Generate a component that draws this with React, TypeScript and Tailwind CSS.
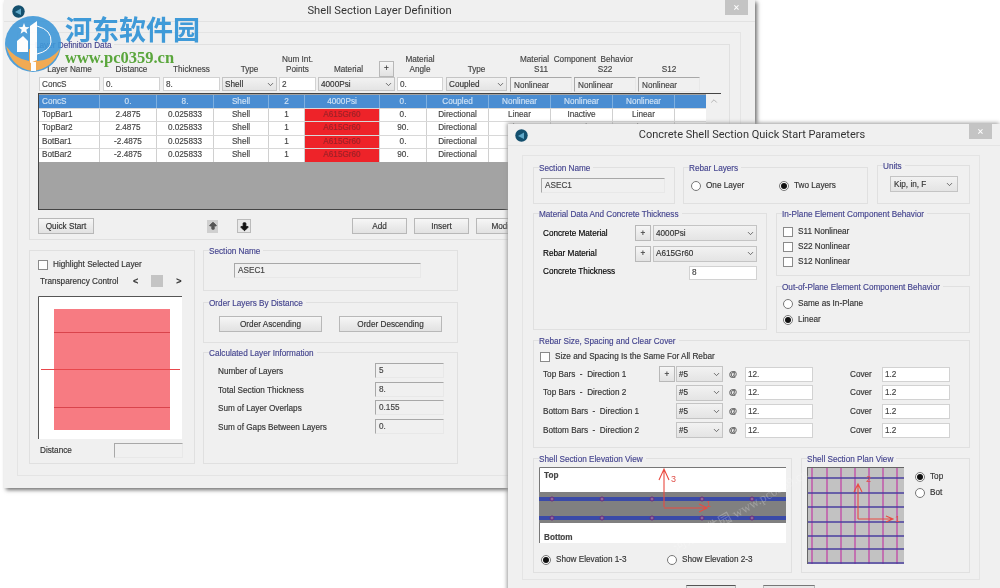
import React from "react";
import { ChevronDown, ChevronUp, ArrowBigUp, ArrowBigDown } from "lucide-react";

type P = { className?: string; children?: React.ReactNode };

const Group = ({ title, className = "", children }: P & { title: string }) => (
  <div className={`relative border border-[#e0e0e0] ${className}`}>
    <span className="absolute top-[-4px] left-[5px] bg-[#f0f0f0] pr-[3px] leading-[10px] whitespace-nowrap text-[#45458f]">{title}</span>
    {children}
  </div>
);
const Btn = ({ className = "", children }: P) => (
  <div className={`flex items-center justify-center border border-[#b8b8b8] bg-linear-to-b from-[#f6f6f6] to-[#e2e2e2] text-[#333] ${className}`}>{children}</div>
);
const Input = ({ className = "", children }: P) => (
  <div className={`flex items-center h-[14px] border border-[#d2d2d2] bg-white pl-[2px] text-[#444] ${className}`}>{children}</div>
);
const Sunken = ({ className = "", children }: P) => (
  <div className={`flex h-[15px] border border-t-[#a8a8a8] border-l-[#a8a8a8] border-r-[#e8e8e8] border-b-[#e8e8e8] bg-[#f0f0f0] pl-[3px] pt-[1px] text-[#444] ${className}`}>{children}</div>
);
const Select = ({ className = "", children }: P) => (
  <div className={`flex items-center justify-between border border-[#c4c4c4] bg-linear-to-b from-[#f2f2f2] to-[#e4e4e4] pl-[2px] pr-[1px] text-[#333] ${className}`}>
    <span>{children}</span>
    <ChevronDown size={9} strokeWidth={2} className="text-[#444]" />
  </div>
);
const Check = ({ label, className = "" }: { label: string; className?: string }) => (
  <div className={`flex items-center text-[#333] ${className}`}>
    <span className="w-[10px] h-[10px] border border-[#8a8a8a] bg-white mr-[5px] shrink-0" />
    <span className="whitespace-nowrap">{label}</span>
  </div>
);
const Radio = ({ label, on = false, className = "" }: { label: string; on?: boolean; className?: string }) => (
  <div className={`flex items-center text-[#333] ${className}`}>
    <span className="flex items-center justify-center w-[10px] h-[10px] rounded-full border border-[#777] bg-white mr-[5px] shrink-0">
      {on && <span className="w-[6px] h-[6px] rounded-full bg-[#111]" />}
    </span>
    <span className="whitespace-nowrap">{label}</span>
  </div>
);
const Close = ({ className = "" }: P) => (
  <div className={`absolute top-0 flex items-center justify-center w-[23px] h-[15px] bg-[#c4c4c4] text-white text-[11px] ${className}`}>×</div>
);
const AppIcon = ({ className = "" }: P) => (
  <svg width="13" height="13" viewBox="0 0 13 13" className={className}>
    <circle cx="6.5" cy="6.5" r="6.2" fill="#14506e" />
    <path d="M3 7 L9 3.5 V10 Z" fill="#5fa8c8" />
  </svg>
);
const Logo = () => (
  <svg width="66" height="70" viewBox="0 0 66 70" className="shrink-0 opacity-90">
    <circle cx="33" cy="40" r="28" fill="#3f98d8" />
    <path d="M6 42 Q12 64 32 67 Q53 65 60 45 Q50 57 37 57 L37 45 L29 45 L29 57 Q15 55 6 42Z" fill="#f2a343" />
    <path d="M17 48 V37 L23 32 L28 37 V48Z" fill="#fff" />
    <path d="M24 19 L25.5 23 L29.5 23.3 L26.3 25.8 L27.4 29.8 L24 27.5 L20.6 29.8 L21.7 25.8 L18.5 23.3 L22.5 23Z" fill="#fff" />
    <path d="M30 22 L37 17 V56 L30 59Z" fill="#fff" />
    <path d="M37 22 Q52 26 51 38 Q50 47 37 50" fill="none" stroke="#fff" strokeWidth="1" />
    <path d="M31 58 H36 V67 H31Z" fill="#fff" />
  </svg>
);

const HEAD_ROWS = [
  ["TopBar1", "2.4875", "0.025833", "Shell", "1", "A615Gr60", "0.", "Directional", "Linear", "Inactive", "Linear"],
  ["TopBar2", "2.4875", "0.025833", "Shell", "1", "A615Gr60", "90.", "Directional", "Linear", "Inactive", "Linear"],
  ["BotBar1", "-2.4875", "0.025833", "Shell", "1", "A615Gr60", "0.", "Directional", "Linear", "Inactive", "Linear"],
  ["BotBar2", "-2.4875", "0.025833", "Shell", "1", "A615Gr60", "90.", "Directional", "Linear", "Inactive", "Linear"],
];
const TOP_ROW = ["ConcS", "0.", "8.", "Shell", "2", "4000Psi", "0.", "Coupled", "Nonlinear", "Nonlinear", "Nonlinear"];
const TABLE_COLS = "grid grid-cols-[61px_57px_57px_55px_36px_75px_47px_62px_62px_62px_62px]";
const ENTRY_COLS = "grid grid-cols-[64px_60px_59px_57px_39px_79px_49px_64px_192px]";

const LayerWindow = () => (
  <div className="absolute left-[4px] top-0 w-[751px] h-[488px] bg-[#f0f0f0] shadow-[2px_2px_4px_#6f6f6f]">
    <div className="relative flex items-center justify-center h-[22px] border-b border-[#e2e2e2] text-[11.2px] text-[#333] font-['Roboto'] [-webkit-text-stroke:0px]">
      <AppIcon className="absolute left-[8px] top-[5px]" />
      Shell Section Layer Definition
      <Close className="right-[7px]" />
    </div>
    <div className="mt-[10px] ml-[13px] w-[724px] h-[444px] border border-[#e4e4e4] pl-[11px] pt-[11px]">
      <Group title="Layer Definition Data" className="w-[701px] h-[196px] pl-[9px] pt-[10px]">
        <div className={`${ENTRY_COLS} h-[22px] items-end pb-[3px] text-[#444] leading-[10px] text-center`}>
          <span className="mr-[3px]">Layer Name</span>
          <span className="mr-[3px]">Distance</span>
          <span className="mr-[2px]">Thickness</span>
          <span className="mr-[2px]">Type</span>
          <span className="mr-[2px]">Num Int.<br />Points</span>
          <div className="flex items-end">
            <span className="w-[61px]">Material</span>
            <Btn className="w-[15px] h-[16px] text-[#222] mb-[-2px]">+</Btn>
          </div>
          <span className="mr-[3px]">Material<br />Angle</span>
          <span className="mr-[3px]">Type</span>
          <div className="flex flex-col">
            <span className="pl-[10px] text-left whitespace-pre">Material  Component  Behavior</span>
            <div className="grid grid-cols-[64px_64px_62px]">
              <span className="mr-[2px]">S11</span>
              <span className="mr-[2px]">S22</span>
              <span>S12</span>
            </div>
          </div>
        </div>
        <div className={`${ENTRY_COLS} h-[14px]`}>
          <Input className="mr-[3px]">ConcS</Input>
          <Input className="mr-[3px]">0.</Input>
          <Input className="mr-[2px]">8.</Input>
          <Select className="mr-[2px] h-[14px]">Shell</Select>
          <Input className="mr-[2px]">2</Input>
          <Select className="mr-[2px] h-[14px]">4000Psi</Select>
          <Input className="mr-[3px]">0.</Input>
          <Select className="mr-[3px] h-[14px]">Coupled</Select>
          <div className="grid grid-cols-[64px_64px_62px]">
            <Sunken className="h-[14px] mr-[2px] items-center pl-[2px] pt-0">Nonlinear</Sunken>
            <Sunken className="h-[14px] mr-[2px] items-center pl-[2px] pt-0">Nonlinear</Sunken>
            <Sunken className="h-[14px] items-center pl-[2px] pt-0">Nonlinear</Sunken>
          </div>
        </div>
        <div className="flex mt-[2px] ml-[-1px] h-[117px] w-[683px] border-t border-[#444]">
          <div className="w-[668px] border-l border-b border-[#444] bg-[#a3a3a3] pt-[1px]">
            <div className={`${TABLE_COLS} h-[13px] bg-[#4a8dd2] text-[#cfe2f5] text-center leading-[13px]`}>
              {TOP_ROW.map((t, i) => (
                <span key={i} className={`border-r border-[#7fb0e0] ${i === 0 ? "text-left pl-[3px]" : ""}`}>{t}</span>
              ))}
            </div>
            {HEAD_ROWS.map((r, ri) => (
              <div key={ri} className={`${TABLE_COLS} h-[13.4px] bg-white text-[#444] text-center leading-[12px] border-t border-[#d8d8d8]`}>
                {r.map((t, i) => (
                  <span key={i} className={`border-r border-[#d0d0d0] ${i === 0 ? "text-left pl-[3px]" : ""} ${i === 5 ? "bg-[#ee2329] text-[#9c2228]" : ""}`}>{t}</span>
                ))}
              </div>
            ))}
          </div>
          <div className="flex justify-center w-[15px] pt-[2px]"><ChevronUp size={10} className="text-[#aaa]" /></div>
        </div>
        <div className="flex items-center mt-[8px] ml-[-1px] h-[16px]">
          <Btn className="w-[56px] h-[16px]">Quick Start</Btn>
          <div className="flex items-center justify-center ml-[113px] w-[11px] h-[13px] bg-[#cfcfcf]"><ArrowBigUp size={10} fill="#555" className="text-[#555]" /></div>
          <div className="flex items-center justify-center ml-[19px] w-[14px] h-[14px] border border-[#bbb] bg-[#e8e8e8]"><ArrowBigDown size={11} fill="#111" className="text-[#111]" /></div>
          <Btn className="ml-[101px] w-[55px] h-[16px]">Add</Btn>
          <Btn className="ml-[7px] w-[55px] h-[16px]">Insert</Btn>
          <Btn className="ml-[7px] w-[55px] h-[16px] border-[#6d9fd0]">Modify</Btn>
          <Btn className="ml-[7px] w-[55px] h-[16px]">Delete</Btn>
        </div>
      </Group>
      <div className="flex mt-[10px]">
        <div className="w-[166px] h-[214px] border border-[#e0e0e0] pl-[8px] pt-[8px] text-[#333]">
          <Check label="Highlight Selected Layer" className="h-[11px]" />
          <div className="flex items-center mt-[4px] h-[14px]">
            <span className="ml-[2px] w-[93px] whitespace-nowrap">Transparency Control</span>
            <span className="text-[9px] font-bold">&lt;</span>
            <span className="ml-[13px] w-[12px] h-[12px] bg-[#c4c4c4]" />
            <span className="ml-[13px] text-[9px] font-bold">&gt;</span>
          </div>
          <svg width="144" height="143" viewBox="0 0 144 143" className="mt-[8px]">
            <rect width="144" height="143" fill="#fff" />
            <path d="M0.5 143 V0.5 H144" fill="none" stroke="#555" />
            <rect x="16" y="13" width="116" height="121" fill="#f77b82" />
            <path d="M16 36.5 H132 M16 111.5 H132" stroke="#d9444c" />
            <path d="M3 73.5 H142" stroke="#e8474c" />
          </svg>
          <div className="flex items-center mt-[4px] h-[14px]">
            <span className="ml-[2px] w-[74px]">Distance</span>
            <Sunken className="w-[69px] h-[14px]" />
          </div>
        </div>
        <div className="ml-[8px] w-[255px] flex flex-col">
          <Group title="Section Name" className="h-[41px] pl-[30px] pt-[12px]">
            <Sunken className="w-[187px]">ASEC1</Sunken>
          </Group>
          <Group title="Order Layers By Distance" className="mt-[11px] h-[41px] flex pl-[15px] pt-[13px]">
            <Btn className="w-[103px] h-[16px]">Order Ascending</Btn>
            <Btn className="ml-[17px] w-[103px] h-[16px]">Order Descending</Btn>
          </Group>
          <Group title="Calculated Layer Information" className="mt-[9px] h-[112px] pl-[14px] pr-[13px] pt-[10px]">
            {[["Number of Layers", "5"], ["Total Section Thickness", "8."], ["Sum of Layer Overlaps", "0.155"], ["Sum of Gaps Between Layers", "0."]].map(([l, v]) => (
              <div key={l} className="flex items-center justify-between h-[15px] mb-[3.7px] text-[#333]">
                <span className="pt-[2px]">{l}</span>
                <Sunken className="w-[69px]">{v}</Sunken>
              </div>
            ))}
          </Group>
        </div>
      </div>
    </div>
  </div>
);

const BAR_ROWS = [
  ["Top Bars  -  Direction 1", true],
  ["Top Bars  -  Direction 2", false],
  ["Bottom Bars  -  Direction 1", false],
  ["Bottom Bars  -  Direction 2", false],
] as const;

const Elevation = () => (
  <div className="relative w-[247px] h-[76px]">
    <svg width="247" height="76" viewBox="0 0 247 76" className="block">
      <rect width="247" height="76" fill="#fff" />
      <path d="M0.5 76 V0.5 H247" fill="none" stroke="#777" />
      <rect y="25" width="247" height="31" fill="#808080" />
      <rect y="30" width="247" height="4" fill="#3a4aa8" />
      <rect y="49" width="247" height="4" fill="#3a4aa8" />
      {[13, 63, 113, 163, 213].map((x) => (
        <g key={x} fill="#8a6a9a" stroke="#6a2a80" strokeWidth="1">
          <circle cx={x} cy="32" r="2" />
          <circle cx={x} cy="51" r="2" />
        </g>
      ))}
      <g fill="none" stroke="#ea4a40" strokeWidth="1.1">
        <path d="M125 40 V2 M120 13 L125 2 L130 13" />
        <path d="M125 41 H168 M160 37 L168 41 L160 45" />
      </g>
      <text x="132" y="15" fontSize="9" fill="#e0504a" fontFamily="Liberation Sans">3</text>
      <text x="167" y="40" fontSize="9" fill="#e0504a" fontFamily="Liberation Sans">1</text>
    </svg>
    <span className="absolute left-[5px] top-[3px] font-bold text-[#444]">Top</span>
    <span className="absolute left-[5px] bottom-[0px] font-bold text-[#444]">Bottom</span>
  </div>
);

const Plan = () => (
  <svg width="97" height="97" viewBox="0 0 97 97" className="block shrink-0">
    <rect width="97" height="97" fill="#c2c2c2" />
    <g stroke="#c050a8" strokeWidth="1.4">
      {[5, 20, 34, 48, 62, 76, 90].map((x) => <path key={x} d={`M${x} 0 V97`} />)}
    </g>
    <g stroke="#4a3f9f" strokeWidth="1.4">
      {[11, 26, 40, 55, 69, 82, 96].map((y) => <path key={y} d={`M0 ${y} H97`} />)}
    </g>
    <path d="M0.5 0 V97 M0 0.5 H97" stroke="#666" fill="none" />
    <g fill="none" stroke="#ea4a40" strokeWidth="1.1">
      <path d="M51 52 V17 M47 25 L51 17 L55 25" />
      <path d="M51 52 H86 M79 49 L86 52 L79 55" />
    </g>
    <text x="59" y="15" fontSize="9" fill="#e0504a" fontFamily="Liberation Sans">2</text>
    <text x="88" y="55" fontSize="9" fill="#e0504a" fontFamily="Liberation Sans">1</text>
  </svg>
);

const QuickWindow = () => (
  <div className="absolute left-[508px] top-[124px] w-[492px] h-[480px] bg-[#f0f0f0] shadow-[-1px_-1px_4px_#9a9a9a]">
    <div className="relative flex items-center justify-center h-[22px] border-b border-[#e4e4e4] pr-[4px] text-[11px] text-[#333] font-['Roboto'] [-webkit-text-stroke:0px]">
      <AppIcon className="absolute left-[7px] top-[5px]" />
      Concrete Shell Section Quick Start Parameters
      <Close className="left-[461px]" />
    </div>
    <div className="mt-[9px] ml-[14px] w-[458px] h-[425px] border border-[#e4e4e4] pl-[10px] pt-[11px]">
      <div className="flex h-[37px]">
        <Group title="Section Name" className="w-[142px] pl-[7px] pt-[10px]">
          <Sunken className="w-[124px]">ASEC1</Sunken>
        </Group>
        <Group title="Rebar Layers" className="ml-[8px] w-[185px] flex pl-[7px] pt-[12px]">
          <Radio label="One Layer" className="h-[11px] w-[88px]" />
          <Radio label="Two Layers" on className="h-[11px]" />
        </Group>
        <Group title="Units" className="ml-[9px] mt-[-2px] h-[39px] w-[93px] pl-[12px] pt-[10px]">
          <Select className="w-[68px] h-[16px] pl-[3px] pr-[3px]">Kip, in, F</Select>
        </Group>
      </div>
      <div className="flex mt-[9px]">
        <Group title="Material Data And Concrete Thickness" className="w-[234px] h-[117px] pl-[9px] pt-[11px] pr-[9px]">
          <div className="flex items-center h-[16px]">
            <span className="w-[92px]">Concrete Material</span>
            <Btn className="w-[16px] h-[16px]">+</Btn>
            <Select className="ml-[2px] w-[104px] h-[16px]">4000Psi</Select>
          </div>
          <div className="flex items-center h-[17px] mt-[4px]">
            <span className="w-[92px]">Rebar Material</span>
            <Btn className="w-[16px] h-[16px]">+</Btn>
            <Select className="ml-[2px] w-[104px] h-[16px]">A615Gr60</Select>
          </div>
          <div className="flex items-center justify-between h-[15px] mt-[3px]">
            <span className="mb-[3px]">Concrete Thickness</span>
            <Input className="w-[68px]">8</Input>
          </div>
        </Group>
        <div className="ml-[9px] w-[194px]">
          <Group title="In-Plane Element Component Behavior" className="h-[63px] pl-[6px] pt-[12px]">
            <Check label="S11 Nonlinear" className="h-[11px]" />
            <Check label="S22 Nonlinear" className="h-[11px] mt-[4px]" />
            <Check label="S12 Nonlinear" className="h-[11px] mt-[4px]" />
          </Group>
          <Group title="Out-of-Plane Element Component Behavior" className="mt-[10px] h-[47px] pl-[6px] pt-[11px]">
            <Radio label="Same as In-Plane" className="h-[11px]" />
            <Radio label="Linear" on className="h-[11px] mt-[5px]" />
          </Group>
        </div>
      </div>
      <Group title="Rebar Size, Spacing and Clear Cover" className="mt-[7px] w-[437px] h-[108px] pl-[6px] pt-[10px]">
        <Check label="Size and Spacing Is the Same For All Rebar" className="h-[11px]" />
        <div className="mt-[3px]">
          {BAR_ROWS.map(([label, plus]) => (
            <div key={label} className="flex items-center h-[18.6px] text-[#333]">
              <span className="ml-[3px] w-[116px] whitespace-pre">{label}</span>
              {plus ? <Btn className="w-[16px] h-[16px]">+</Btn> : <span className="w-[16px]" />}
              <Select className="ml-[1px] w-[47px] h-[16px]">#5</Select>
              <span className="ml-[6px] w-[16px] font-bold text-[#555]">@</span>
              <Input className="w-[68px] h-[15px]">12.</Input>
              <span className="ml-[37px] w-[32px]">Cover</span>
              <Input className="w-[68px] h-[15px]">1.2</Input>
            </div>
          ))}
        </div>
      </Group>
      <div className="flex mt-[10px]">
        <Group title="Shell Section Elevation View" className="w-[259px] h-[115px] pl-[5px] pt-[8px]">
          <Elevation />
          <div className="flex mt-[11px] h-[11px]">
            <Radio label="Show Elevation 1-3" on className="ml-[2px] w-[126px]" />
            <Radio label="Show Elevation 2-3" />
          </div>
        </Group>
        <Group title="Shell Section Plan View" className="ml-[9px] w-[169px] h-[115px] flex pl-[5px] pt-[8px]">
          <Plan />
          <div className="ml-[11px] pt-[4px]">
            <Radio label="Top" on className="h-[11px]" />
            <Radio label="Bot" className="h-[11px] mt-[5px]" />
          </div>
        </Group>
      </div>
    </div>
    <div className="flex mt-[5px] ml-[178px]">
      <div className="w-[50px] h-[16px] border border-[#b8b8b8] border-t-[#555] bg-[#e8e8e8]" />
      <div className="ml-[27px] w-[52px] h-[16px] border border-[#b8b8b8] border-t-[#777] bg-[#e8e8e8]" />
    </div>
  </div>
);

export default function App() {
  return (
    <div className="relative w-[1000px] h-[588px] overflow-hidden bg-white font-['Liberation_Sans',sans-serif] text-[8.2px] leading-[11px] [-webkit-text-stroke:0.15px] blur-[0.4px]">
      <LayerWindow />
      <QuickWindow />
      <div className="absolute left-[664px] top-[505px] rotate-[-30deg] text-[13px] text-white/25 font-['Liberation_Serif','Noto_Sans_CJK_SC',serif] whitespace-nowrap [-webkit-text-stroke:0px]">河东软件园 www.pc0359.cn</div>
      <div className="absolute left-[0px] top-[4px] flex items-start [-webkit-text-stroke:0px]">
        <Logo />
        <div className="ml-[-1px] mt-[8px] flex flex-col">
          <span className="text-[27px] leading-[33px] font-bold text-[#3f9ad8] font-['Noto_Sans_CJK_SC',sans-serif]">河东软件园</span>
          <span className="mt-[3px] text-[16.5px] leading-[20px] font-bold text-[#5aa63c] font-['Liberation_Serif',serif]">www.pc0359.cn</span>
        </div>
      </div>
    </div>
  );
}
